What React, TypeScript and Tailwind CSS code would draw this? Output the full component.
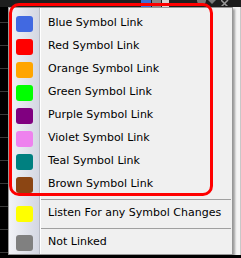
import React from "react";

const items = [
  { label: "Blue Symbol Link", color: "bg-[#4169e1]" },
  { label: "Red Symbol Link", color: "bg-[#ff0000]" },
  { label: "Orange Symbol Link", color: "bg-[#ffa500]" },
  { label: "Green Symbol Link", color: "bg-[#00ff00]" },
  { label: "Purple Symbol Link", color: "bg-[#800080]" },
  { label: "Violet Symbol Link", color: "bg-[#ee82ee]" },
  { label: "Teal Symbol Link", color: "bg-[#008080]" },
  { label: "Brown Symbol Link", color: "bg-[#8b4513]" },
];

function Item({ label, color }: { label: string; color: string }) {
  return (
    <div className="flex h-[23px] items-center">
      <div className="flex w-[30px] justify-center pl-[1px]">
        <div className={`h-[16px] w-[17px] rounded-[3px] ${color}`} />
      </div>
      <div className="pl-[9px] text-[11px] text-black">{label}</div>
    </div>
  );
}

function Sep() {
  return (
    <div className="flex h-[6px] items-center pl-[32px] pr-[1px]">
      <div className="h-px w-full bg-[#a0a0a0]" />
    </div>
  );
}

export default function App() {
  return (
    <div
      className="relative flex h-[258px] w-[241px] flex-col overflow-hidden bg-black"
      style={{ fontFamily: '"DejaVu Sans", Verdana, sans-serif' }}
    >
      {/* top toolbar */}
      <div className="flex h-[7px] w-full shrink-0 items-start bg-[#1e1e1e] pl-[141px]">
        <div className="h-[7px] w-[10px] bg-[#3b6fd8]" />
        <div className="ml-[1px] h-[7px] w-[9px] bg-[#8a8a8a]" />
        <div className="ml-[1px] h-[7px] w-[7px] bg-[#d8d8d8]" />
        <div className="ml-[28px] h-[5px] w-[9px] rounded-b-full bg-[#7a7a7a]" />
        <svg className="ml-[2px]" width="8" height="5" viewBox="0 0 8 5">
          <path d="M0 0 L8 0 L4 4 Z" fill="#7a7a7a" />
        </svg>
        <svg className="ml-[5px]" width="8" height="6" viewBox="0 0 8 6">
          <path d="M0 0 L7 7 M7 0 L0 7" stroke="#9a9a9a" strokeWidth="1.5" />
        </svg>
      </div>
      {/* body row */}
      <div className="flex flex-1">
        <div className="flex w-[8px] flex-col gap-[22px] pt-[15px]">
          {Array.from({ length: 11 }).map((_, i) => (
            <div key={i} className="h-px w-full bg-[#3a3a3a]" />
          ))}
        </div>
        <div className="flex-1" />
        <div className="mb-[3px] w-[9px] border-r border-[#c8c8c8] bg-[#f4f4f4]" />
      </div>

      {/* menu popup */}
      <div className="absolute left-[8px] top-[7px] h-[248px] w-[225px] border border-[#979797] bg-[#f0f0f0] shadow-[2px_2px_2px_rgba(0,0,0,0.35)]">
        <div className="absolute bottom-0 left-0 top-0 flex">
          <div className="w-[30px] bg-gradient-to-r from-[#f2f3f7] to-[#d4d7e2]" />
          <div className="w-px bg-[#b9bcc6]" />
          <div className="w-px bg-white" />
        </div>
        <div className="relative flex flex-col pt-[4px]">
          {items.map((it) => (
            <Item key={it.label} {...it} />
          ))}
          <Sep />
          <Item label="Listen For any Symbol Changes" color="bg-[#ffff00]" />
          <Sep />
          <Item label="Not Linked" color="bg-[#808080]" />
        </div>
      </div>

      {/* red highlight annotation */}
      <div className="absolute left-[9px] top-[3px] h-[193px] w-[204px] rounded-[10px] border-[3px] border-[#ff0000]" />
    </div>
  );
}
